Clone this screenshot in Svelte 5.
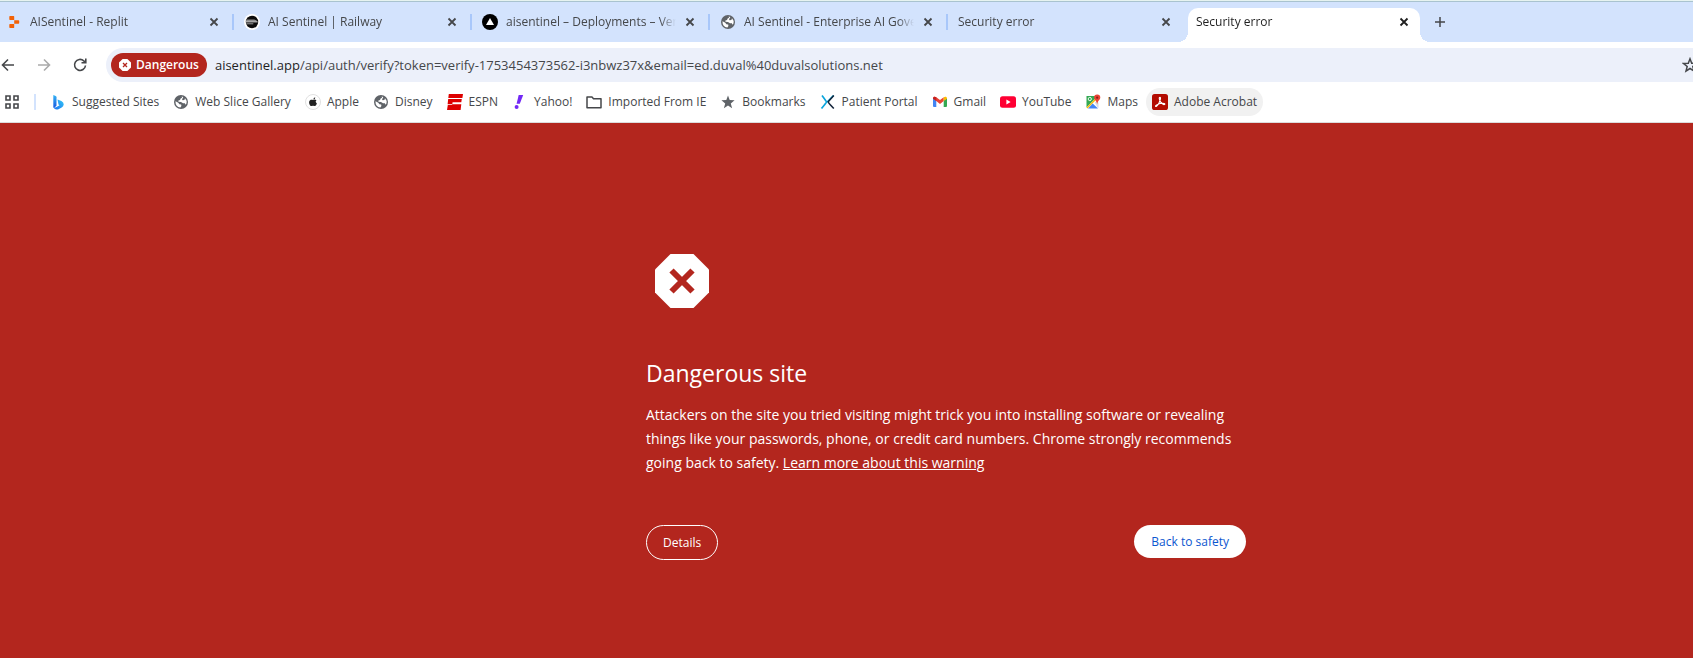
<script>
  const tabs = [
    { title: 'AISentinel - Replit', icon: 'replit' },
    { title: 'AI Sentinel | Railway', icon: 'railway' },
    { title: 'aisentinel – Deployments – Vercel', icon: 'vercel' },
    { title: 'AI Sentinel - Enterprise AI Governance', icon: 'globe' },
    { title: 'Security error', icon: null },
    { title: 'Security error', icon: null, active: true }
  ];
  const bookmarks = [
    { label: 'Suggested Sites', icon: 'bing' },
    { label: 'Web Slice Gallery', icon: 'globe' },
    { label: 'Apple', icon: 'apple' },
    { label: 'Disney', icon: 'globe' },
    { label: 'ESPN', icon: 'espn' },
    { label: 'Yahoo!', icon: 'yahoo' },
    { label: 'Imported From IE', icon: 'folder' },
    { label: 'Bookmarks', icon: 'star' },
    { label: 'Patient Portal', icon: 'portal' },
    { label: 'Gmail', icon: 'gmail' },
    { label: 'YouTube', icon: 'youtube' },
    { label: 'Maps', icon: 'maps' },
    { label: 'Adobe Acrobat', icon: 'acrobat', hovered: true }
  ];
</script>

{#snippet icon(name)}
  <svg class="icon" viewBox="0 0 16 16" aria-hidden="true">
    {#if name === 'replit'}
      <path fill="#f26207" d="M4 2h3.600a.6.6 0 0 1 .6.600V6H4a.7.7 0 0 1-.7-.700V2.700A.7.7 0 0 1 4 2zM8.200 6.200h4.300a.7.7 0 0 1 .7.700v2.200a.7.7 0 0 1-.7.700H8.200zM4 10h4.200v3.400a.6.6 0 0 1-.6.600H4a.7.7 0 0 1-.7-.700v-2.600A.7.7 0 0 1 4 10z" />
    {:else if name === 'railway'}
      <circle cx="8" cy="8" r="8" fill="#fff" />
      <circle cx="8" cy="8" r="6.200" fill="#0c0c0c" />
      <path fill="#8d8d8d" d="M2.300 5.400h7.700q2.700.3 3.700 2.600H1.900z" />
      <path d="M1.900 8h11.800M2.300 9.800h7" fill="none" stroke="#ddd" stroke-width=".7" />
    {:else if name === 'vercel'}
      <circle cx="8" cy="8" r="8" fill="#000" />
      <path fill="#fff" d="M8 4l4 7H4z" />
    {:else if name === 'globe'}
      <circle cx="8" cy="8" r="7" fill="#5f6368" />
      <path fill="#fff" d="M2.600 7.300l2.700 1.500 1.100 1.400 1.800.2.200 1.500-1 1.600A5.500 5.500 0 0 1 2.500 8zM8.500 2.500l.7 1-1.800 1.200-.3 1.300-1.700.6v1.100l2.600.2 2 1.300 2 .1.200 1.500 1.300-1.300A5.600 5.600 0 0 0 12 4.200L11.400 6 9.500 6.300 9 5l1-.9.200-1.200A5.500 5.500 0 0 0 8.500 2.500z" />
    {:else if name === 'bing'}
      <defs>
        <linearGradient id="bing-stem" x1="0" y1="0" x2="0" y2="1"><stop offset="0" stop-color="#35b5f5" /><stop offset="1" stop-color="#1657e0" /></linearGradient>
        <linearGradient id="bing-bowl" x1="0" y1="1" x2="1" y2="0"><stop offset="0" stop-color="#1b6ff0" /><stop offset="1" stop-color="#35c8f5" /></linearGradient>
      </defs>
      <path fill="url(#bing-stem)" d="M3.300 1l2.400 1q.8.4.8 1.300v8.500L3.900 14l-.6-1.500z" />
      <path fill="url(#bing-bowl)" d="M7.500 5.400l3.900 1.500q2.400 1.200 2.300 3.600-.2 2-2 3l-3.200 1.800q-2.600.9-4.200-.8-.9-1-1-2 1.500 1.700 3.200.6l3-1.900-1-.7z" />
    {:else if name === 'apple'}
      <circle cx="8" cy="8" r="7.500" fill="#fff" stroke="#d8d8d8" stroke-width=".8" />
      <path fill="#222" d="M10.300 3.200q.1 1.700-1.900 2.200Q8.300 3.800 10.300 3.200zM8 5.900q1.800-.9 3.500.4-1.800 1.500.4 3.200-.9 2.500-2.100 2.500L8 11.700l-1.500.4C5 12 3.700 9.200 4.200 7.400 4.700 5.800 6.300 5.300 8 5.900z" />
    {:else if name === 'espn'}
      <path fill="#d00" d="M1.800 0H16l-.6 4H1.300zM1.200 5h13.600l-.5 3.200H5.600l-.3 2.100h9L13.600 16H0l.8-5h4.400v-.7H.6z" />
    {:else if name === 'yahoo'}
      <path fill="#7228f5" d="M6.700 1h4.500L7.800 9.800H4.600z" />
      <circle cx="4.600" cy="13" r="2" fill="#7228f5" />
    {:else if name === 'folder'}
      <path fill="none" stroke="#45474a" stroke-width="1.500" stroke-linejoin="round" d="M1 3h5l1.500 1.700H15v9H1z" />
    {:else if name === 'star'}
      <path fill="#5f6368" d="M8 1.500l1.700 4.600 4.900.2-3.800 3.100 1.300 4.800L8 11.500l-4.100 2.700 1.300-4.800-3.800-3.100 4.900-.2z" />
    {:else if name === 'portal'}
      <path fill="none" stroke="#0aa5dc" stroke-width="1.700" d="M2 1.500q4.500 6 4.500 6.500T1.500 14.500M7.200 8L13.500 1.500" />
      <path fill="none" stroke="#14263b" stroke-width="1.600" d="M13.800 1.500L8.200 7.700q0 1 5.600 6.800" />
    {:else if name === 'gmail'}
      <path fill="#4285f4" d="M1 4l3.300 2.500V13H2a1 1 0 0 1-1-1z" />
      <path fill="#34a853" d="M11.700 6.500L15 4v8a1 1 0 0 1-1 1h-2.300z" />
      <path fill="#ea4335" d="M1 4.500C1 2.700 2.800 2.200 4.300 3.300L8 6l3.700-2.700v3.800L8 9.900 4.300 7.100z" />
      <path fill="#c5221f" d="M1 4.500C1 2.700 2.800 2.200 4.300 3.300v3.800L1 4.700z" />
      <path fill="#fbbc04" d="M11.700 3.300C13.200 2.200 15 2.700 15 4.500v.2l-3.300 2.400z" />
    {:else if name === 'youtube'}
      <rect x="0" y="2.300" width="16" height="11.400" rx="2.500" fill="#f03" />
      <path fill="#fff" d="M6.400 5.600l4.200 2.400-4.200 2.400z" />
    {:else if name === 'maps'}
      <path fill="#34a853" d="M2 2h11L1.500 13.500V2.500z" />
      <path fill="#dadce0" d="M9.500 8l2-2.500L13.500 9v4.500l-.5.700z" />
      <path fill="#fff" d="M1.500 14L11 4.500l1 2L4 14.500z" />
      <path fill="#fbbc04" d="M1.500 13.500L10.500 4.500l.7 1.200L2.500 14.500z" />
      <path fill="#4285f4" d="M3 14.500L7.700 9.500l5.300 5z" />
      <circle cx="4.800" cy="5" r="1.600" fill="none" stroke="#fff" stroke-width=".9" />
      <path fill="#ea4335" d="M12.200 .5a3.100 3.100 0 0 1 3.100 3.100c0 2.200-2.600 3.200-3.100 6.700-.5-3.500-3.100-4.500-3.100-6.700A3.100 3.100 0 0 1 12.200 .5z" />
      <circle cx="12.200" cy="3.700" r="1.100" fill="#8d1f17" />
    {:else if name === 'acrobat'}
      <rect width="16" height="16" rx="2.600" fill="#b30b00" />
      <path fill="none" stroke="#fff" stroke-width="1.100" d="M7.500 3.500q1.300-.7.900 1.600C7.800 8 6 11 4.500 12.300q-1.300.6-.8-.6Q5.500 9.800 10.500 9.300q2.500 0 2.300 1-1 .9-2.800-.6Q8 8 7.300 4.800 7.100 3.800 7.500 3.500z" />
    {/if}
  </svg>
{/snippet}

{#snippet cross()}
  <svg class="cross" viewBox="0 0 10 10" aria-hidden="true"><path d="M1.500 1.500l7 7M8.500 1.500l-7 7" /></svg>
{/snippet}

<div class="browser">
  <header>
    <nav class="tabs" aria-label="Tabs">
      {#each tabs as tab}
        <div class="tab" class:active={tab.active}>
          <a href="#top" class="tab-link">
            {#if tab.icon}{@render icon(tab.icon)}{/if}
            <span class="tab-title">{tab.title}</span>
          </a>
          <button class="close" aria-label="Close tab">{@render cross()}</button>
        </div>
      {/each}
      <button class="new-tab" aria-label="New tab">
        <svg viewBox="0 0 12 12" aria-hidden="true"><path d="M6 1v10M1 6h10" /></svg>
      </button>
    </nav>

    <div class="toolbar">
      <button class="tool" aria-label="Back">
        <svg viewBox="0 0 16 16"><path d="M14 8H3M8 2.500L2.500 8 8 13.500" /></svg>
      </button>
      <button class="tool" aria-label="Forward" disabled>
        <svg viewBox="0 0 16 16"><path d="M2 8h11M8 2.500L13.500 8 8 13.500" /></svg>
      </button>
      <button class="tool" aria-label="Reload">
        <svg viewBox="0 0 16 16"><path d="M13.500 8.500a5.500 5.500 0 1 1-1.700-4.600L13.500 5.500M13.800 1.500v4.300H9.500" /></svg>
      </button>
      <div class="omnibox">
        <button class="danger-chip">
          <svg viewBox="0 0 12 12" aria-hidden="true">
            <path fill="#fff" d="M3.600 0h4.800L12 3.600v4.800L8.400 12H3.600L0 8.400V3.600z" />
            <path stroke="#b3261e" stroke-width="1.300" d="M4 4l4 4M8 4L4 8" />
          </svg>
          Dangerous
        </button>
        <div class="url"><span class="host">aisentinel.app</span>/api/auth/verify?token=verify-1753454373562-i3nbwz37x&amp;email=ed.duval%40duvalsolutions.net</div>
        <button class="save" aria-label="Bookmark this tab">
          <svg viewBox="0 0 16 16"><path d="M8 1.800l1.700 4.400 4.700.3-3.600 3 1.200 4.600L8 11.500l-4 2.600 1.200-4.600-3.600-3 4.700-.3z" /></svg>
        </button>
      </div>
    </div>

    <nav class="bookmarks" aria-label="Bookmarks">
      <button class="apps" aria-label="Tab groups">
        <svg viewBox="0 0 16 16"><path d="M2 2h4v4H2zM10 2h4v4h-4zM2 10h4v4H2zM10 10h4v4h-4z" /></svg>
      </button>
      <div class="divider"></div>
      {#each bookmarks as b}
        <a href="#top" class="bookmark" class:hovered={b.hovered}>{@render icon(b.icon)}<span>{b.label}</span></a>
      {/each}
    </nav>
  </header>

  <main>
    <section class="warning">
      <svg class="stop" viewBox="0 0 54 54" aria-hidden="true">
        <path fill="#fff" d="M15.500 0h23L54 15.500v23L38.500 54h-23L0 38.500v-23z" />
        <path stroke="#b3261e" stroke-width="6" d="M16.500 16.500l21 21M37.500 16.500l-21 21" />
      </svg>
      <h1>Dangerous site</h1>
      <p>
        Attackers on the site you tried visiting might trick you into installing software or revealing things like your passwords, phone, or credit card numbers. Chrome strongly recommends going back to safety. <a href="#top">Learn more about this warning</a>
      </p>
      <div class="actions">
        <button class="details">Details</button>
        <button class="primary">Back to safety</button>
      </div>
    </section>
  </main>
</div>

<style>
  :global(body) {
    background: #b3261e;
  }
  .browser {
    min-height: 100vh;
    display: flex;
    flex-direction: column;
    overflow: hidden;
    font-family: 'Open Sans', 'Noto Sans', sans-serif;
    font-size: 12px;
    line-height: 16px;
    color: #45474a;
    background: #b3261e;
  }
  button {
    font: inherit;
    color: inherit;
    border: 0;
    padding: 0;
    background: none;
    cursor: pointer;
  }
  a {
    color: inherit;
    text-decoration: none;
  }
  svg {
    display: block;
    flex: none;
    fill: none;
  }
  header {
    background: #fff;
    border-top: 1px solid #e6f3f0;
    border-bottom: 1px solid #dcdcdc;
  }
  .icon {
    width: 16px;
    height: 16px;
  }

  .tabs {
    display: flex;
    align-items: center;
    height: 40px;
    border-top: 1px solid #a9c3cf;
    background: #d3e3fd;
  }
  .tab {
    position: relative;
    display: flex;
    align-items: center;
    flex: 0 1 238px;
    min-width: 0;
    box-sizing: border-box;
    height: 40px;
    padding: 0 12px 0 10px;
  }
  .tab:first-child {
    flex-basis: 234px;
    padding-left: 6px;
  }
  .tab:not(.active)::after {
    content: '';
    position: absolute;
    right: 0;
    top: 12px;
    width: 2px;
    height: 16px;
    background: #a8c7fa;
  }
  .tab:nth-last-child(3)::after {
    display: none;
  }
  .tab-link {
    display: flex;
    align-items: center;
    gap: 8px;
    flex: 1;
    min-width: 0;
  }
  .tab-title {
    flex: 1;
    overflow: hidden;
    white-space: nowrap;
    mask-image: linear-gradient(to left, transparent, #000 16px);
  }
  .close {
    display: grid;
    place-items: center;
    width: 16px;
    height: 16px;
    margin-left: 6px;
  }
  .cross {
    width: 10px;
    height: 10px;
    stroke: #45474a;
    stroke-width: 1.800;
  }
  .active {
    flex-basis: 232px;
    align-self: flex-end;
    height: 34px;
    margin-left: 2px;
    padding: 0 8px 6px;
    border-radius: 10px 10px 0 0;
    background: #fff;
    color: #1f1f1f;
  }
  .active::before,
  .active::after {
    content: '';
    position: absolute;
    bottom: 0;
    width: 10px;
    height: 10px;
  }
  .active::before {
    right: 100%;
    background: radial-gradient(circle at 0 0, transparent 10px, #fff 10px);
  }
  .active::after {
    left: 100%;
    background: radial-gradient(circle at 100% 0, transparent 10px, #fff 10px);
  }
  .active .cross {
    stroke: #1f1f1f;
  }
  .new-tab {
    margin-left: 14px;
  }
  .new-tab svg {
    width: 12px;
    height: 12px;
    stroke: #45474a;
    stroke-width: 1.500;
  }

  .toolbar {
    display: flex;
    align-items: center;
    gap: 20px;
    padding-top: 6px;
  }
  .tool svg {
    width: 16px;
    height: 16px;
    stroke: #45474a;
    stroke-width: 1.600;
  }
  .tool:disabled svg {
    stroke: #aaa;
  }
  .omnibox {
    flex: 1;
    min-width: 0;
    display: flex;
    align-items: center;
    height: 34px;
    margin-left: -2px;
    padding-left: 5px;
    border-radius: 17px 0 0 17px;
    background: #ecf0fa;
    overflow: hidden;
  }
  .danger-chip {
    display: flex;
    align-items: center;
    gap: 5px;
    height: 24px;
    padding: 0 8px;
    border-radius: 12px;
    background: #b3261e;
    color: #fff;
    font-weight: 600;
  }
  .danger-chip svg {
    width: 12px;
    height: 12px;
  }
  .url {
    flex: 1;
    min-width: 0;
    margin-left: 8px;
    overflow: hidden;
    white-space: nowrap;
    font-size: 13px;
    line-height: 20px;
  }
  .host {
    color: #1f1f1f;
  }
  .save {
    margin-right: -5px;
  }
  .save svg {
    width: 16px;
    height: 16px;
    stroke: #45474a;
    stroke-width: 1.500;
  }

  .bookmarks {
    display: flex;
    align-items: center;
    gap: 2px;
    height: 40px;
    padding-left: 4px;
    white-space: nowrap;
  }
  .apps svg {
    width: 16px;
    height: 16px;
    stroke: #45474a;
    stroke-width: 1.600;
  }
  .divider {
    width: 2px;
    height: 16px;
    margin: 0 6px 0 12px;
    background: #d3e3fd;
  }
  .bookmark {
    display: flex;
    align-items: center;
    gap: 6px;
    height: 28px;
    padding: 0 6px;
    border-radius: 14px;
  }
  .hovered {
    background: #f1f1f1;
  }

  main {
    flex: 1;
    padding: 131px 24px 64px 223px;
    color: #fff;
  }
  .warning {
    max-width: 600px;
    margin: 0 auto;
  }
  .stop {
    width: 54px;
    height: 54px;
    margin-left: 9px;
  }
  h1 {
    margin: 49px 0 14px;
    font-size: 23px;
    line-height: 32px;
    font-weight: 400;
  }
  p {
    margin: 0;
    font-size: 14px;
    line-height: 24px;
  }
  p a {
    text-decoration: underline;
  }
  .actions {
    display: flex;
    justify-content: space-between;
    align-items: flex-start;
    margin-top: 50px;
  }
  .details {
    height: 35px;
    padding: 0 16px;
    border: 1px solid #fff;
    border-radius: 18px;
  }
  .primary {
    height: 33px;
    padding: 0 17px;
    border-radius: 17px;
    background: #fff;
    color: #0b57d0;
  }
</style>
